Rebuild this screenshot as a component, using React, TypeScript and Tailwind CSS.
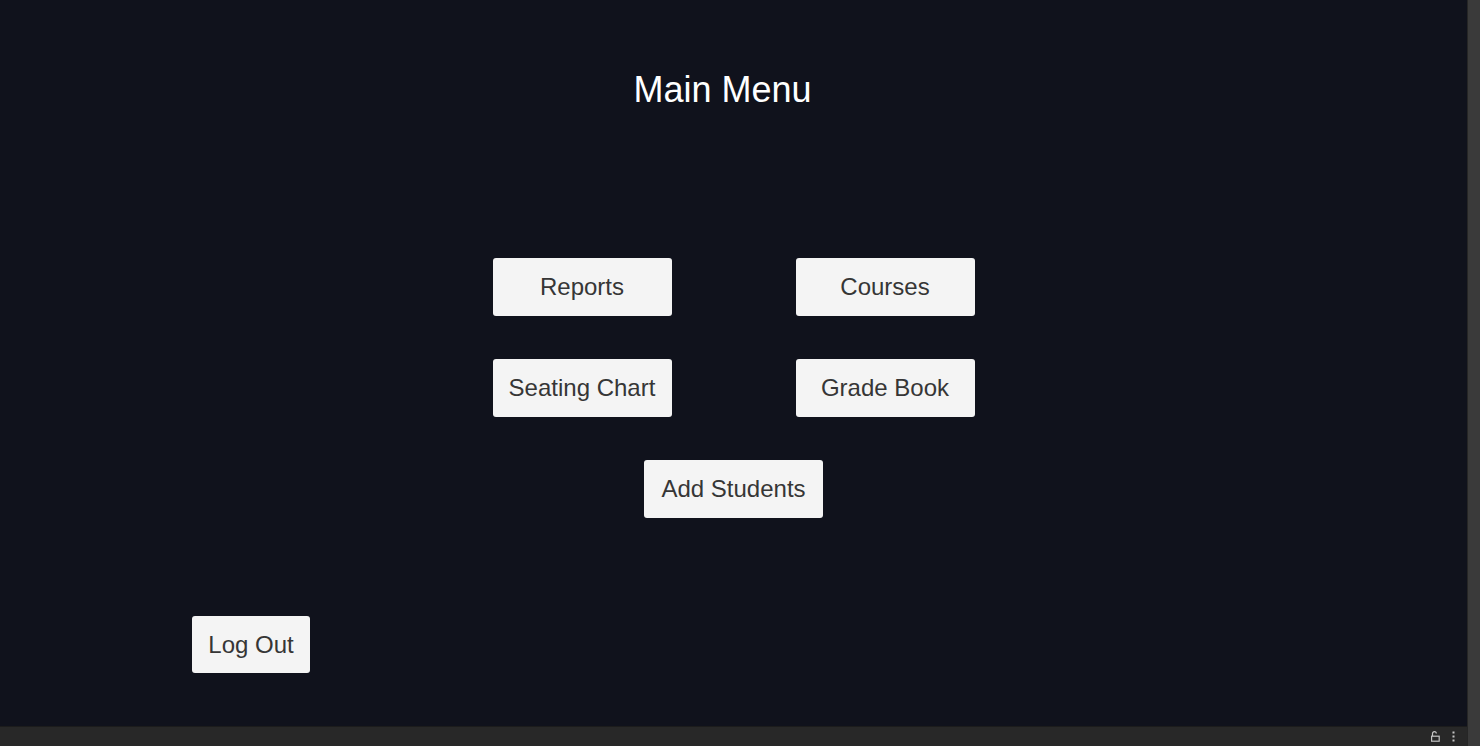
const menuButton =
  'flex h-[58px] w-[179px] items-center justify-center rounded-[3px] bg-[#f4f4f4] text-[24px] leading-none text-[#363636]'

function LockIcon() {
  return (
    <svg width="9" height="11" viewBox="0 0 9 11" fill="none" stroke="#c4c4c4" strokeWidth="1.2">
      <path d="M1.5 5V2.6C1.5 1.4 2.3 0.7 3.4 0.7S5.3 1.4 5.3 2.6" />
      <rect x="0.6" y="5.2" width="7.6" height="5" />
    </svg>
  )
}

function MoreIcon() {
  return (
    <svg width="3" height="11" viewBox="0 0 3 11" fill="#c4c4c4">
      <rect x="0.5" y="0.5" width="2" height="2" />
      <rect x="0.5" y="4.5" width="2" height="2" />
      <rect x="0.5" y="8.5" width="2" height="2" />
    </svg>
  )
}

function App() {
  return (
    <div className="flex h-[746px] w-[1480px] overflow-hidden bg-[#10121c] font-['Liberation_Sans',Arial,sans-serif]">
      <div className="flex w-[1467px] flex-col">
        <main className="flex h-[726px] flex-col items-center bg-[#10121c]">
          <h1 className="mt-[72px] pr-[22px] text-[36px] leading-[36px] font-normal text-white">Main Menu</h1>

          <div className="mt-[150px] grid grid-cols-[179px_179px] gap-x-[124px] gap-y-[43px]">
            <button className={menuButton}>Reports</button>
            <button className={menuButton}>Courses</button>
            <button className={menuButton}>Seating Chart</button>
            <button className={menuButton}>Grade Book</button>
            <button className={`${menuButton} col-span-2 justify-self-center`}>Add Students</button>
          </div>

          <button className="mt-[98px] ml-[192px] flex h-[57px] w-[118px] items-center justify-center self-start rounded-[3px] bg-[#f4f4f4] text-[24px] leading-none text-[#363636]">
            Log Out
          </button>
        </main>
        <footer className="flex h-[20px] items-center justify-end gap-[12px] border-t border-[#1c1c1c] bg-[#282828] pr-[12px]">
          <LockIcon />
          <MoreIcon />
        </footer>
      </div>
      <div className="w-[13px] border-l border-[#262626] bg-[#3a3a3a]" />
    </div>
  )
}

export default App
